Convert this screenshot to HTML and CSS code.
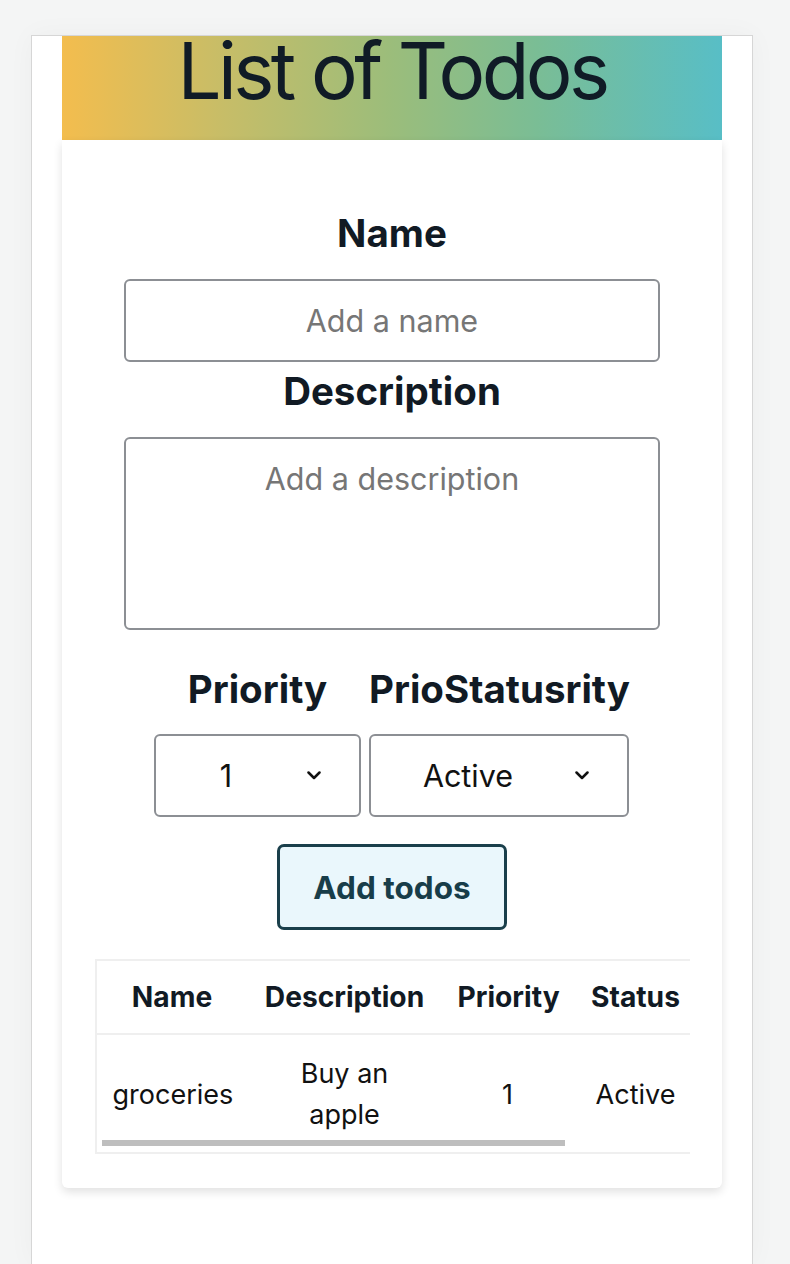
FILE: index.html
```html
<!DOCTYPE html>
<html lang="en">
<head>
<meta charset="utf-8">
<title>List of Todos</title>
<link rel="stylesheet" href="styles.css">
</head>
<body>
<div class="frame">
  <header class="banner">
    <h1 class="title">List of Todos</h1>
  </header>
  <main class="card">
    <label class="label label-name" for="name">Name</label>
    <input class="field field-name" id="name" type="text" placeholder="Add a name">
    <label class="label label-desc" for="desc">Description</label>
    <textarea class="field field-desc" id="desc" placeholder="Add a description"></textarea>
    <div class="selects">
      <div class="select-col">
        <label class="label label-sel" for="prio">Priority</label>
        <div class="select-wrap">
          <select class="select select-prio" id="prio">
            <option>1</option>
            <option>2</option>
            <option>3</option>
          </select>
          <svg class="chev" width="14" height="9" viewBox="0 0 14 9"><path d="M1.5 1.5 L7 7 L12.5 1.5" fill="none" stroke="#111" stroke-width="2.5" stroke-linecap="round" stroke-linejoin="round"/></svg>
        </div>
      </div>
      <div class="select-col">
        <label class="label label-sel" for="status">PrioStatusrity</label>
        <div class="select-wrap">
          <select class="select select-status" id="status">
            <option>Active</option>
            <option>Done</option>
          </select>
          <svg class="chev" width="14" height="9" viewBox="0 0 14 9"><path d="M1.5 1.5 L7 7 L12.5 1.5" fill="none" stroke="#111" stroke-width="2.5" stroke-linecap="round" stroke-linejoin="round"/></svg>
        </div>
      </div>
    </div>
    <button class="add-btn" type="button">Add todos</button>
    <div class="table-wrap">
      <table class="todos">
        <colgroup>
          <col class="c-name">
          <col class="c-desc">
          <col class="c-prio">
          <col class="c-status">
        </colgroup>
        <thead>
          <tr><th>Name</th><th>Description</th><th>Priority</th><th>Status</th></tr>
        </thead>
        <tbody>
          <tr><td>groceries</td><td>Buy an apple</td><td>1</td><td>Active</td></tr>
        </tbody>
      </table>
      <div class="scroll-thumb"></div>
    </div>
  </main>
</div>
</body>
</html>
```

FILE: styles.css
```css
* { box-sizing: border-box; }

html, body {
  margin: 0;
  padding: 0;
}

body {
  background: #f4f5f5;
  font-family: Inter, "Noto Sans", "Liberation Sans", sans-serif;
  color: #111a24;
  overflow: hidden;
}

.frame {
  width: 722px;
  min-height: 1229px;
  margin: 35px 0 0 31px;
  padding: 0 30px;
  background: #ffffff;
  border: 1px solid #d6d6d6;
  border-bottom: none;
  box-shadow: 0 0 26px rgba(0, 0, 0, 0.035);
}

.banner {
  height: 104px;
  background: linear-gradient(90deg, #f3bd4e 0%, #c6bd68 25%, #9bbd7b 50%, #7abd95 72%, #58bec6 100%);
  text-align: center;
}

.title {
  margin: 0;
  font-size: 78px;
  font-weight: 400;
  line-height: 70px;
  letter-spacing: -3.6px;
  color: #101b26;
}

.card {
  display: flex;
  flex-direction: column;
  align-items: center;
  padding: 71px 0 34px;
  background: #ffffff;
  border-radius: 0 0 6px 6px;
  box-shadow: 0 4px 10px rgba(0, 0, 0, 0.12);
}

.label {
  display: block;
  font-size: 38.5px;
  font-weight: 700;
  line-height: 44px;
  color: #111a24;
  margin: 0 0 24px;
}

.label-desc {
  margin-top: 7px;
}

.field {
  display: block;
  width: 536px;
  border: 2px solid #8c8f94;
  border-radius: 6px;
  background: #fff;
  font-family: Inter, "Noto Sans", sans-serif;
  font-size: 30.5px;
  color: #111;
  text-align: center;
  outline: none;
}

.field::placeholder {
  color: #767676;
}

.field-name {
  height: 83px;
  padding: 0 16px;
}

.field-desc {
  height: 193px;
  padding: 22px 16px;
  resize: none;
  line-height: 36px;
}

.selects {
  display: flex;
  gap: 8px;
  margin-top: 37px;
}

.select-col {
  display: flex;
  flex-direction: column;
  align-items: center;
}

.label-sel {
  margin-bottom: 23px;
}

.select-wrap {
  position: relative;
}

.select {
  display: block;
  height: 83px;
  padding: 0 63px 0 0;
  border: 2px solid #8c8f94;
  border-radius: 6px;
  background: #fff;
  font-family: Inter, "Noto Sans", sans-serif;
  font-size: 30.5px;
  color: #111;
  text-align: center;
  text-align-last: center;
  -webkit-appearance: none;
  appearance: none;
  outline: none;
}

.select-prio { width: 207px; }
.select-status { width: 260px; }

.chev {
  position: absolute;
  right: 40px;
  top: 37px;
  pointer-events: none;
}

.add-btn {
  margin-top: 27px;
  width: 230px;
  height: 86px;
  border: 3px solid #1a3f4b;
  border-radius: 7px;
  background: #eaf7fc;
  font-family: Inter, "Noto Sans", sans-serif;
  font-size: 31.5px;
  font-weight: 700;
  color: #183d49;
}

.table-wrap {
  position: relative;
  margin-top: 29px;
  width: 595px;
  overflow: hidden;
  border: 2px solid #efefef;
  border-right: none;
}

.todos {
  table-layout: fixed;
  width: 601px;
  border-collapse: separate;
  border-spacing: 0;
  font-size: 27px;
  line-height: 41px;
  color: #111;
}

.c-name { width: 151px; }
.c-desc { width: 194px; }
.c-prio { width: 132px; }
.c-status { width: 124px; }

.todos th,
.todos td {
  padding: 0 16px;
  text-align: center;
  vertical-align: middle;
}

.todos th {
  padding-top: 16px;
  padding-bottom: 15px;
  font-size: 28.2px;
  font-weight: 700;
  color: #111a24;
  border-bottom: 2px solid #efefef;
}

.todos td {
  padding-top: 18px;
  padding-bottom: 17px;
  font-weight: 400;
}

.scroll-thumb {
  position: absolute;
  left: 5px;
  bottom: 6px;
  width: 463px;
  height: 6px;
  background: #bebebe;
}
```
